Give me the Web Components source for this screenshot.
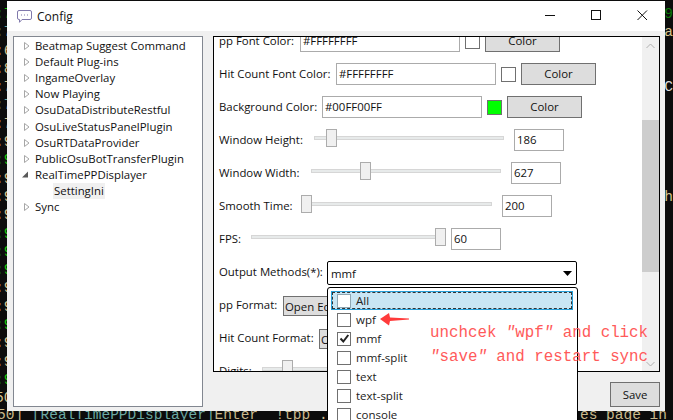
<!DOCTYPE html>
<html>
<head>
<meta charset="utf-8">
<title>Config</title>
<style>
    html, body { margin: 0; padding: 0; background: #0c0c0c; overflow: hidden; }
</style>
</head>
<body>
<cfg-desktop>
    <cfg-window title-text="Config">
        <cfg-tree slot="tree">
            <cfg-tree-item label="Beatmap Suggest Command"></cfg-tree-item>
            <cfg-tree-item label="Default Plug-ins"></cfg-tree-item>
            <cfg-tree-item label="IngameOverlay"></cfg-tree-item>
            <cfg-tree-item label="Now Playing"></cfg-tree-item>
            <cfg-tree-item label="OsuDataDistributeRestful"></cfg-tree-item>
            <cfg-tree-item label="OsuLiveStatusPanelPlugin"></cfg-tree-item>
            <cfg-tree-item label="OsuRTDataProvider"></cfg-tree-item>
            <cfg-tree-item label="PublicOsuBotTransferPlugin"></cfg-tree-item>
            <cfg-tree-item label="RealTimePPDisplayer" expanded>
                <cfg-tree-item label="SettingIni" leaf selected></cfg-tree-item>
            </cfg-tree-item>
            <cfg-tree-item label="Sync"></cfg-tree-item>
        </cfg-tree>
        <cfg-panel slot="panel">
            <cfg-color-row label="pp Font Color:" label-w="81" value="#FFFFFFFF" swatch="#ffffff"></cfg-color-row>
            <cfg-color-row label="Hit Count Font Color:" label-w="117" value="#FFFFFFFF" swatch="#ffffff"></cfg-color-row>
            <cfg-color-row label="Background Color:" label-w="103" value="#00FF00FF" swatch="#00ff00"></cfg-color-row>
            <cfg-slider-row label="Window Height:" label-w="94" thumb="13" value="186"></cfg-slider-row>
            <cfg-slider-row label="Window Width:" label-w="91" thumb="50" value="627"></cfg-slider-row>
            <cfg-slider-row label="Smooth Time:" label-w="82" thumb="0" value="200"></cfg-slider-row>
            <cfg-slider-row label="FPS:" label-w="31" thumb="185" value="60"></cfg-slider-row>
            <cfg-combo-row label="Output Methods(*):" label-w="108" value="mmf"></cfg-combo-row>
            <cfg-editor-row label="pp Format:" label-w="64"></cfg-editor-row>
            <cfg-editor-row label="Hit Count Format:" label-w="100"></cfg-editor-row>
            <cfg-slider-row label="Digits:" label-w="42" thumb="21" value=""></cfg-slider-row>
        </cfg-panel>
        <cfg-popup slot="overlay">
            <cfg-check-item label="All" focused></cfg-check-item>
            <cfg-check-item label="wpf"></cfg-check-item>
            <cfg-check-item label="mmf" checked></cfg-check-item>
            <cfg-check-item label="mmf-split"></cfg-check-item>
            <cfg-check-item label="text"></cfg-check-item>
            <cfg-check-item label="text-split"></cfg-check-item>
            <cfg-check-item label="console"></cfg-check-item>
        </cfg-popup>
        <cfg-note slot="overlay"></cfg-note>
    </cfg-window>
</cfg-desktop>

<script>
class CfgDesktop extends HTMLElement {
    constructor() {
        super();
        this.attachShadow({ mode: 'open' });
    }

    connectedCallback() {
        // left and right fragments of the console that stick out around the window
        const rows = [
            [':7', 'g', '19', 'g2'], [':7', 't', 'ra', 'y'], [':6', 'y'], [':8', 'y'],
            [':7', 'y', 'C', 'w'], [':7', 't'], [':7', 'y'], [':9', 'y'],
            [':9', 'g'], [':9', 'y'], [':9', 'y', ':h', 'y'], [':9', 'y'],
            [':9', 'g'], [':9', 'g'], [':9', 'g'], [':9', 'y'],
            [':9', 'y'], [':9', 'g'], [':9', 'y'], [':9', 'y'],
            [':9', 'g'], ['50', 'y']
        ];
        const lines = rows.map(r => `<div class="line frag"><span class="${r[1]}">${r[0]}</span><span class="${r[3] || ''}">${r[2] || ''}</span></div>`).join('');
        this.shadowRoot.innerHTML = `
            <style>
                :host {
                    display: block;
                    position: relative;
                    width: 673px;
                    height: 420px;
                    overflow: hidden;
                    background: #0c0c0c;
                    font-family: "Open Sans", "Liberation Sans", sans-serif;
                    font-size: 11.4px;
                    color: #111;
                }
                .console {
                    padding-top: 3px;
                    font: 14.5px/18.3px "Liberation Mono", monospace;
                    white-space: pre;
                    color: #c9b98c;
                }
                .line { display: flex; justify-content: space-between; height: 18.3px; margin-left: -3px; margin-right: -1px; }
                .frag { margin-left: -5px; margin-right: 0; }
                .frag span { position: relative; top: 2px; }
                .g { color: #16c60c; }
                .g2 { color: #0a7a08; }
                .t { color: #6aa8a2; }
                .y { color: #d6c48f; }
                .w { color: #ddd; }
            </style>
            <div class="console">${lines}<div class="line"><span>50] <span class="t">[RealTimePPDisplayer]</span>Enter  !tpp .${' '.repeat(29)}es page in</span></div></div>
            <slot></slot>
        `;
    }
}

class CfgWindow extends HTMLElement {
    constructor() {
        super();
        this.attachShadow({ mode: 'open' });
    }

    connectedCallback() {
        this.shadowRoot.innerHTML = `
            <style>
                :host {
                    display: flex;
                    flex-direction: column;
                    position: absolute;
                    left: 7px;
                    top: 1px;
                    width: 658px;
                    height: 410px;
                    background: #f0f0f0;
                }
                .title {
                    display: flex;
                    align-items: center;
                    height: 30px;
                    background: #fff;
                    padding-left: 10px;
                    flex: none;
                }
                .title svg.icon { width: 15px; height: 13px; margin-right: 5px; margin-top: 1px; }
                .title .name { font-size: 12px; }
                .ctrl { margin-left: auto; display: flex; }
                .ctrl svg { display: block; width: 46px; height: 30px; }
                .main { display: flex; padding-top: 5px; padding-left: 6px; }
                .right { margin-left: 10px; width: 447px; display: flex; flex-direction: column; }
                .foot { display: flex; justify-content: flex-end; margin-top: 10px; }
            </style>
            <div class="title">
                <svg class="icon" viewBox="0 0 15 13" fill="none" stroke="#8079ac" stroke-width="1">
                    <path d="M2 .5h11a1.5 1.5 0 0 1 1.5 1.5v6a1.5 1.5 0 0 1-1.5 1.5H5L2.5 12.3V9.500H2A1.500 1.500 0 0 1 .5 8V2A1.500 1.500 0 0 1 2 .5z"/>
                    <path d="M4 5h1M7 5h1M10 5h1" stroke="#8079ac" stroke-width="1.200"/>
                </svg>
                <span class="name">${this.getAttribute('title-text')}</span>
                <div class="ctrl">
                    <svg viewBox="0 0 46 30" fill="none" stroke="#111" stroke-width="1"><path d="M18 14.500h10"/></svg>
                    <svg viewBox="0 0 46 30" fill="none" stroke="#111" stroke-width="1"><rect x="18.500" y="9.500" width="9" height="9"/></svg>
                    <svg viewBox="0 0 46 30" fill="none" stroke="#111" stroke-width="1"><path d="M18.500 9.500l9.500 9.500M28 9.500l-9.500 9.500"/></svg>
                </div>
            </div>
            <div class="main">
                <slot name="tree"></slot>
                <div class="right">
                    <slot name="panel"></slot>
                    <div class="foot"><cfg-button w="50" h="25">Save</cfg-button></div>
                </div>
            </div>
            <slot name="overlay"></slot>
        `;
    }
}

class CfgTree extends HTMLElement {
    constructor() {
        super();
        this.attachShadow({ mode: 'open' }).innerHTML = `
            <style>
                :host {
                    display: block;
                    box-sizing: border-box;
                    width: 190px;
                    height: 371px;
                    background: #fff;
                    border: 1px solid #828790;
                    padding-top: 1px;
                    flex: none;
                }
            </style>
            <slot></slot>
        `;
    }
}

class CfgTreeItem extends HTMLElement {
    constructor() {
        super();
        this.attachShadow({ mode: 'open' });
    }

    connectedCallback() {
        const expanded = this.hasAttribute('expanded');
        const leaf = this.hasAttribute('leaf');
        const selected = this.hasAttribute('selected');
        let arrow = `<svg width="10" height="16" viewBox="0 0 10 16"><path d="M1.500 4.500v7l4.500-3.500z" fill="#fff" stroke="#a6a6a6"/></svg>`;
        if (expanded) arrow = `<svg width="10" height="16" viewBox="0 0 10 16" style="overflow:visible"><path d="M-1 10.500h6v-6z" fill="#595959"/></svg>`;
        if (leaf) arrow = `<span style="width:10px"></span>`;
        this.shadowRoot.innerHTML = `
            <style>
                :host { display: block; }
                .row { display: flex; align-items: center; height: 16.1px; padding-left: 9px; }
                .text { margin-left: 1px; padding: 0 1px; line-height: 16px; white-space: nowrap; ${selected ? 'background:#f0f0f0;' : ''} }
                .kids { padding-left: 19px; }
            </style>
            <div class="row">${arrow}<span class="text">${this.getAttribute('label')}</span></div>
            <div class="kids"><slot></slot></div>
        `;
    }
}

class CfgPanel extends HTMLElement {
    constructor() {
        super();
        this.attachShadow({ mode: 'open' }).innerHTML = `
            <style>
                :host {
                    display: flex;
                    box-sizing: border-box;
                    width: 447px;
                    height: 336px;
                    background: #fff;
                    border: 1px solid #000;
                    overflow: hidden;
                    flex: none;
                }
                .content { flex: 1; overflow: hidden; }
                .rows { margin-top: -13px; }
                .bar {
                    width: 17px;
                    flex: none;
                    background: #f0f0f0;
                    display: grid;
                    grid-template-rows: 83px 152px 1fr;
                }
                .bar i { display: block; background: #cdcdcd; grid-row: 2; }
                .bar svg { display: block; margin: 6px auto 0; }
                .bar .down { grid-row: 3; align-self: end; margin: 0 auto 4px; }
            </style>
            <div class="content"><div class="rows"><slot></slot></div></div>
            <div class="bar">
                <svg width="9" height="6" viewBox="0 0 9 6" fill="none" stroke="#b0b0b0"><path d="M.5 5l4-4 4 4"/></svg>
                <i></i>
                <svg class="down" width="9" height="6" viewBox="0 0 9 6" fill="none" stroke="#b0b0b0"><path d="M.5 1l4 4 4-4"/></svg>
            </div>
        `;
    }
}

const rowCss = `
    :host { display: flex; align-items: flex-start; height: 33px; box-sizing: border-box; padding: 6px 0 0 5px; white-space: nowrap; }
    .label { line-height: 22px; flex: none; }
`;

class CfgInput extends HTMLElement {
    constructor() {
        super();
        this.attachShadow({ mode: 'open' });
    }

    connectedCallback() {
        this.shadowRoot.innerHTML = `
            <style>
                :host {
                    display: block;
                    box-sizing: border-box;
                    flex: none;
                    width: ${this.getAttribute('w')}px;
                    height: 22px;
                    border: 1px solid #ababab;
                    background: #fff;
                    padding-left: 2px;
                    line-height: 20px;
                }
            </style>
            <slot></slot>
        `;
    }
}

class CfgButton extends HTMLElement {
    constructor() {
        super();
        this.attachShadow({ mode: 'open' });
    }

    connectedCallback() {
        this.shadowRoot.innerHTML = `
            <style>
                :host {
                    display: block;
                    box-sizing: border-box;
                    flex: none;
                    width: ${this.getAttribute('w')}px;
                    height: ${this.getAttribute('h')}px;
                    border: 1px solid #707070;
                    background: #dddddd;
                    text-align: center;
                    line-height: ${this.getAttribute('h') - 2}px;
                }
            </style>
            <slot></slot>
        `;
    }
}

class CfgColorRow extends HTMLElement {
    constructor() {
        super();
        this.attachShadow({ mode: 'open' });
    }

    connectedCallback() {
        const a = n => this.getAttribute(n);
        this.shadowRoot.innerHTML = `
            <style>
                ${rowCss}
                .swatch {
                    box-sizing: border-box;
                    width: 15px;
                    height: 15px;
                    margin: 4px 5px 0;
                    flex: none;
                    border: 1px solid #707070;
                    background: ${a('swatch')};
                }
            </style>
            <span class="label" style="width:${a('label-w')}px">${a('label')}</span>
            <cfg-input w="160">${a('value')}</cfg-input>
            <div class="swatch"></div>
            <cfg-button w="75" h="22">Color</cfg-button>
        `;
    }
}

class CfgSliderRow extends HTMLElement {
    constructor() {
        super();
        this.attachShadow({ mode: 'open' });
    }

    connectedCallback() {
        const a = n => this.getAttribute(n);
        const box = a('value') ? `<cfg-input w="50">${a('value')}</cfg-input>` : '';
        this.shadowRoot.innerHTML = `
            <style>
                ${rowCss}
                .slider { position: relative; width: 196px; height: 22px; margin-right: 5px; flex: none; }
                .track {
                    box-sizing: border-box;
                    margin: 7px 0 0 1px;
                    width: 190px;
                    height: 4px;
                    background: #e7eaea;
                    border: 1px solid #d6d6d6;
                }
                .thumb {
                    position: absolute;
                    top: 0;
                    left: ${a('thumb')}px;
                    box-sizing: border-box;
                    width: 11px;
                    height: 18px;
                    background: #f0f0f0;
                    border: 1px solid #acacac;
                }
            </style>
            <span class="label" style="width:${a('label-w')}px">${a('label')}</span>
            <div class="slider"><div class="track"></div><div class="thumb"></div></div>
            ${box}
        `;
    }
}

class CfgComboRow extends HTMLElement {
    constructor() {
        super();
        this.attachShadow({ mode: 'open' });
    }

    connectedCallback() {
        const a = n => this.getAttribute(n);
        this.shadowRoot.innerHTML = `
            <style>
                ${rowCss}
                .combo {
                    box-sizing: border-box;
                    display: flex;
                    align-items: center;
                    justify-content: space-between;
                    width: 250px;
                    height: 24px;
                    border: 1px solid #000;
                    border-radius: 2px;
                    background: #fff;
                    padding: 0 4px 0 3px;
                    flex: none;
                }
            </style>
            <span class="label" style="width:${a('label-w')}px">${a('label')}</span>
            <div class="combo"><span>${a('value')}</span>
                <svg width="9" height="5" viewBox="0 0 9 5"><path d="M0 0h9L4.500 5z" fill="#000"/></svg>
            </div>
        `;
    }
}

class CfgEditorRow extends HTMLElement {
    constructor() {
        super();
        this.attachShadow({ mode: 'open' });
    }

    connectedCallback() {
        const a = n => this.getAttribute(n);
        this.shadowRoot.innerHTML = `
            <style>
                ${rowCss}
                .btn {
                    box-sizing: border-box;
                    width: 90px;
                    height: 20px;
                    margin-top: 2px;
                    border: 1px solid #707070;
                    background: #dddddd;
                    padding-left: 1px;
                    line-height: 20px;
                    flex: none;
                }
            </style>
            <span class="label" style="width:${a('label-w')}px">${a('label')}</span>
            <div class="btn">Open Editor</div>
        `;
    }
}

class CfgPopup extends HTMLElement {
    constructor() {
        super();
        this.attachShadow({ mode: 'open' }).innerHTML = `
            <style>
                :host {
                    display: block;
                    position: absolute;
                    left: 320px;
                    top: 286px;
                    box-sizing: border-box;
                    width: 251px;
                    height: 150px;
                    background: #fff;
                    border: 1px solid #000;
                    border-radius: 3px 3px 0 0;
                    padding: 3px 4px 0 3px;
                    font-size: 11.5px;
                }
            </style>
            <slot></slot>
        `;
    }
}

class CfgCheckItem extends HTMLElement {
    constructor() {
        super();
        this.attachShadow({ mode: 'open' });
    }

    connectedCallback() {
        const focused = this.hasAttribute('focused');
        const tick = this.hasAttribute('checked')
            ? `<svg width="11" height="11" viewBox="0 0 11 11"><path d="M1.500 5.500l2.800 3 5-6.500" fill="none" stroke="#222" stroke-width="2"/></svg>`
            : '';
        this.shadowRoot.innerHTML = `
            <style>
                :host {
                    display: flex;
                    align-items: center;
                    box-sizing: border-box;
                    height: 19px;
                    padding-left: 6px;
                    color: #222;
                    position: relative;
                    ${focused ? 'background:#c9e6f4; box-shadow: inset 0 0 0 1px #26a0da;' : ''}
                }
                .box {
                    box-sizing: border-box;
                    width: 14px;
                    height: 14px;
                    margin-right: 5px;
                    background: #fff;
                    border: 1px solid ${focused ? '#8fa7b3' : '#707070'};
                    display: flex;
                    align-items: center;
                    justify-content: center;
                    flex: none;
                }
                .focus { position: absolute; inset: 1px; border: 1px dashed #333; pointer-events: none; }
            </style>
            <div class="box">${tick}</div><span>${this.getAttribute('label')}</span>
            ${focused ? '<div class="focus"></div>' : ''}
        `;
    }
}

class CfgNote extends HTMLElement {
    constructor() {
        super();
        this.attachShadow({ mode: 'open' }).innerHTML = `
            <style>
                :host { display: contents; }
                .arrow { position: absolute; left: 373px; top: 311px; }
                .text {
                    position: absolute;
                    left: 423px;
                    top: 320px;
                    font: 15.8px/24px "Liberation Mono", monospace;
                    color: #ff5a5a;
                    white-space: pre;
                }
                i { font-style: italic; }
            </style>
            <svg class="arrow" width="30" height="14" viewBox="0 0 30 14">
                <path d="M0 7L9 1l1 4.500L29 6.500v1L10 9l-1 4.500z" fill="#ff3b3b"/>
            </svg>
            <div class="text">unchcek <i>″</i>wpf<i>″</i> and click
<i>″</i>save<i>″</i> and restart sync</div>
        `;
    }
}

// children first, so the nested tags are ready when the window renders
customElements.define('cfg-input', CfgInput);
customElements.define('cfg-button', CfgButton);
customElements.define('cfg-color-row', CfgColorRow);
customElements.define('cfg-slider-row', CfgSliderRow);
customElements.define('cfg-combo-row', CfgComboRow);
customElements.define('cfg-editor-row', CfgEditorRow);
customElements.define('cfg-tree-item', CfgTreeItem);
customElements.define('cfg-tree', CfgTree);
customElements.define('cfg-panel', CfgPanel);
customElements.define('cfg-check-item', CfgCheckItem);
customElements.define('cfg-popup', CfgPopup);
customElements.define('cfg-note', CfgNote);
customElements.define('cfg-window', CfgWindow);
customElements.define('cfg-desktop', CfgDesktop);
</script>
</body>
</html>
